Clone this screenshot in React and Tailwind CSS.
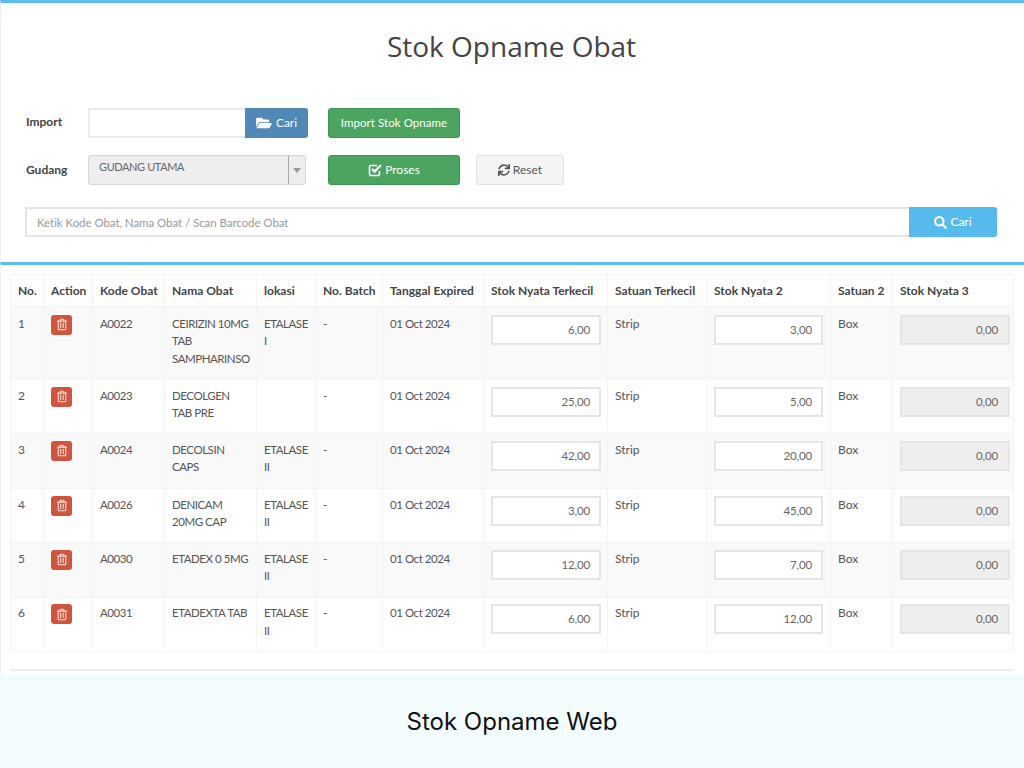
import React from "react";
import { FaFolderOpen, FaSync, FaSearch, FaRegTrashAlt } from "react-icons/fa";

const rows = [
  { no: 1, kode: "A0022", nama: "CEIRIZIN 10MG\nTAB\nSAMPHARINSO", lokasi: "ETALASE I", s1: "6,00", s2: "3,00", h: "h-[73px]", pt: "pt-[7.5px]" },
  { no: 2, kode: "A0023", nama: "DECOLGEN\nTAB PRE", lokasi: "", s1: "25,00", s2: "5,00", h: "h-[54px]", pt: "pt-[6.5px]" },
  { no: 3, kode: "A0024", nama: "DECOLSIN\nCAPS", lokasi: "ETALASE II", s1: "42,00", s2: "20,00", h: "h-[55px]", pt: "pt-[6.5px]" },
  { no: 4, kode: "A0026", nama: "DENICAM\n20MG CAP", lokasi: "ETALASE II", s1: "3,00", s2: "45,00", h: "h-[54px]", pt: "pt-[6.5px]" },
  { no: 5, kode: "A0030", nama: "ETADEX 0 5MG", lokasi: "ETALASE II", s1: "12,00", s2: "7,00", h: "h-[55px]", pt: "pt-[6.5px]" },
  { no: 6, kode: "A0031", nama: "ETADEXTA TAB", lokasi: "ETALASE II", s1: "6,00", s2: "12,00", h: "h-[54px]", pt: "pt-[6px]" },
];

const headers = ["No.", "Action", "Kode Obat", "Nama Obat", "lokasi", "No. Batch", "Tanggal Expired", "Stok Nyata Terkecil", "Satuan Terkecil", "Stok Nyata 2", "Satuan 2", "Stok Nyata 3"];
const widths = ["w-[33px]", "w-[49px]", "w-[72px]", "w-[92px]", "w-[59px]", "w-[67px]", "w-[101px]", "w-[124px]", "w-[99px]", "w-[124px]", "w-[62px]", "w-[121px]"];

const cell = "border border-[#f4f4f4] px-[7px] align-top";
const tight = "text-[11.5px] tracking-[-0.45px]";

const NumBox = ({ value, disabled }) => (
  <div className={`h-[30px] border-2 border-[#e3e5ea] flex items-center justify-end text-[11.5px] tracking-[-0.15px] text-[#666] ${disabled ? "bg-[#eeeeee] pr-[10px]" : "bg-white pr-[9px]"}`}>
    {value}
  </div>
);

const CheckIcon = () => (
  <svg viewBox="0 0 14 14" className="w-[14px] h-[14px]" fill="none" stroke="currentColor">
    <path d="M11.5 8v3a1.5 1.5 0 0 1-1.5 1.5H3A1.5 1.5 0 0 1 1.5 11V4A1.5 1.5 0 0 1 3 2.5h6" strokeWidth="1.6" />
    <path d="M4 6l2.6 2.6L13 2" strokeWidth="2.2" />
  </svg>
);

const App = () => {
  return (
    <div className="w-[1024px] h-[768px] overflow-hidden bg-white text-[#444] font-['Lato','Liberation_Sans',sans-serif]">
      {/* Top box */}
      <div className="h-[262px] border-t-[3px] border-l border-[#5bbdea] border-l-[#eef0f5] pl-[24px] pr-[26px]">
        <h1 className="text-[28px] leading-[36px] text-center text-[#444] pt-[25px] font-['Open_Sans',sans-serif]">Stok Opname Obat</h1>

        <div className="flex items-center mt-[44px] h-[30px]">
          <label className="w-[63px] pl-[1px] text-[12px] font-bold text-[#444] -mt-[2px]">Import</label>
          <div className="w-[157px] h-[30px] border-2 border-r-0 border-[#e8e9ee] bg-white"></div>
          <button className="w-[63px] h-[30px] bg-[#5088b8] text-white text-[12px] rounded-r-[3px] flex items-center justify-center gap-[4px]">
            <FaFolderOpen className="w-[16px] h-[14px]" />
            Cari
          </button>
          <button className="ml-[20px] w-[132px] h-[30px] bg-[#4ba561] border border-[#3f9455] rounded-[3px] text-white text-[11.5px] tracking-[0.05px]">Import Stok Opname</button>
        </div>

        <div className="flex items-center mt-[17px] h-[30px]">
          <label className="w-[63px] pl-[1px] text-[12px] font-bold text-[#444]">Gudang</label>
          <div className="w-[218px] h-[30px] bg-[#eeeeee] border border-[#d5d6da] rounded-[3px] flex">
            <span className="flex-1 pl-[10px] pt-[3px] text-[11px] tracking-[-0.4px] text-[#666]">GUDANG UTAMA</span>
            <span className="w-[17px] border-l border-[#a9a9a9] flex items-center justify-center">
              <span className="w-0 h-0 border-x-[4px] border-x-transparent border-t-[5px] border-t-[#999]"></span>
            </span>
          </div>
          <button className="ml-[22px] w-[132px] h-[30px] bg-[#4ba561] border border-[#3f9455] rounded-[3px] text-white text-[12px] flex items-center justify-center gap-[3px]">
            <CheckIcon />
            Proses
          </button>
          <button className="ml-[16px] w-[88px] h-[30px] bg-[#f4f4f4] border border-[#e2e2e2] rounded-[3px] text-[#555] text-[12px] flex items-center justify-center gap-[3px]">
            <FaSync className="w-[12px] h-[12px]" />
            Reset
          </button>
        </div>

        <div className="flex mt-[22px] w-[972px] h-[30px]">
          <div className="flex-1 border-2 border-r-0 border-[#e3e5ea] bg-white pl-[10px] pt-[1px] flex items-center text-[11.5px] tracking-[-0.06px] text-[#999]">Ketik Kode Obat, Nama Obat / Scan Barcode Obat</div>
          <button className="w-[88px] h-[30px] bg-[#56bbec] rounded-r-[3px] text-white text-[12px] flex items-center justify-center gap-[3px]">
            <FaSearch className="w-[13px] h-[13px]" />
            Cari
          </button>
        </div>
      </div>

      {/* Table box */}
      <div className="h-[413px] border-t-[3px] border-l border-[#5bbdea] border-l-[#eef0f5] pl-[9px] pt-[9px]">
        <table className="table-fixed border-collapse w-[1003px] text-[12px] text-[#555]">
          <colgroup>
            {widths.map((w, i) => (
              <col key={i} className={w} />
            ))}
          </colgroup>
          <thead>
            <tr className="h-[32px]">
              {headers.map((h) => (
                <th key={h} className="border border-[#f4f4f4] px-[7px] text-left font-bold text-[12px] text-[#444] whitespace-nowrap">{h}</th>
              ))}
            </tr>
          </thead>
          <tbody>
            {rows.map((r) => (
              <tr key={r.no} className={`${r.h} leading-[17.5px] ${r.no % 2 === 1 ? "bg-[#f9f9f9]" : "bg-white"}`}>
                <td className={`${cell} ${r.pt}`}>{r.no}</td>
                <td className={`${cell} ${r.pt}`}>
                  <button className="w-[21px] h-[20px] bg-[#d0553f] rounded-[3px] flex items-center justify-center">
                    <FaRegTrashAlt className="w-[10px] h-[13px] text-[#f8e2dd]" />
                  </button>
                </td>
                <td className={`${cell} ${r.pt} ${tight}`}>{r.kode}</td>
                <td className={`${cell} ${r.pt} ${tight} whitespace-pre pr-0`}>{r.nama}</td>
                <td className={`${cell} ${r.pt} ${tight}`}>{r.lokasi}</td>
                <td className={`${cell} ${r.pt}`}>-</td>
                <td className={`${cell} ${r.pt} ${tight}`}>01 Oct 2024</td>
                <td className={`${cell} ${r.pt} pr-[6px]`}><NumBox value={r.s1} /></td>
                <td className={`${cell} ${r.pt}`}>Strip</td>
                <td className={`${cell} ${r.pt}`}><NumBox value={r.s2} /></td>
                <td className={`${cell} ${r.pt}`}>Box</td>
                <td className={`${cell} ${r.pt} pr-[3px]`}><NumBox value="0,00" disabled /></td>
              </tr>
            ))}
          </tbody>
        </table>
        <div className="mt-[17px] w-[1003px] h-[2px] bg-[#eeeeee]"></div>
      </div>

      {/* Caption */}
      <div className="h-[93px] bg-[#f3fcff] flex items-center justify-center text-[24px] text-[#111] font-['Inter',sans-serif]">Stok Opname Web</div>
    </div>
  );
};

export default App;
